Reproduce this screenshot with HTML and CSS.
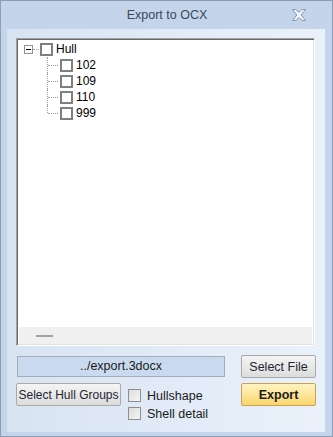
FILE: index.html
```html
<!DOCTYPE html>
<html lang="en">
  <head>
    <meta charset="utf-8" />
    <title>Export to OCX</title>
    <link rel="stylesheet" href="styles.css">
  </head>
  <body>
    <div class="window">
      <!-- Title bar -->
      <div class="titlebar">
        <span class="title">Export to OCX</span>
        <svg class="close" width="14" height="12" viewBox="0 0 14 12">
          <path d="M0.5 0.5H3.8L7 3.3L10.2 0.5H13.5L9.2 6L13.5 11.5H10.2L7 8.7L3.8 11.5H0.5L4.8 6Z" fill="#f1f5fb" stroke="#8397b1" stroke-width="1" stroke-linejoin="round"/>
        </svg>
      </div>

      <div class="client">
        <!-- Hull tree -->
        <div class="tree">
          <div class="tree-list">
            <div class="tree-row root">
              <span class="expander"></span>
              <span class="connector"></span>
              <span class="tree-check"></span>
              <span class="tree-label">Hull</span>
            </div>
            <div class="children">
              <div class="tree-row child"><span class="tree-check"></span><span class="tree-label">102</span></div>
              <div class="tree-row child"><span class="tree-check"></span><span class="tree-label">109</span></div>
              <div class="tree-row child"><span class="tree-check"></span><span class="tree-label">110</span></div>
              <div class="tree-row child last"><span class="tree-check"></span><span class="tree-label">999</span></div>
            </div>
          </div>
          <div class="hscroll"><span class="hscroll-dash"></span></div>
        </div>

        <!-- File row -->
        <div class="file-row">
          <div class="path-box">../export.3docx</div>
          <button class="btn">Select File</button>
        </div>

        <!-- Options row -->
        <div class="options-row">
          <button class="btn btn-groups">Select Hull Groups</button>
          <div class="checks">
            <label class="check"><span class="check-box"></span>Hullshape</label>
            <label class="check"><span class="check-box"></span>Shell detail</label>
          </div>
          <button class="btn btn-export">Export</button>
        </div>
      </div>
    </div>
  </body>
</html>
```

FILE: styles.css
```css
/* Dialog frame */
body {
  margin: 0;
  font-family: "Liberation Sans", Arial, sans-serif;
  font-size: 12px;
  background: #ffffff;
}

.window {
  width: 333px;
  height: 437px;
  box-sizing: border-box;
  border: 1px solid #8d9db5;
  background: #c4d5eb;
  padding: 0 7px 4px 6px;
  display: flex;
  flex-direction: column;
}

.titlebar {
  height: 28px;
  display: flex;
  align-items: center;
  justify-content: center;
  position: relative;
  flex-shrink: 0;
}

.title {
  color: #3b4759;
  font-size: 12.5px;
  padding-left: 2px;
}

.close {
  position: absolute;
  right: 19px;
  top: 8px;
}

.client {
  flex: 1;
  background: linear-gradient(90deg, #d8e3f2 0%, #e3ecf8 60%, #eaf1fa 100%);
  padding: 9px 9px 0 9px;
  display: flex;
  flex-direction: column;
}

/* Tree view */
.tree {
  width: 299px;
  height: 308px;
  box-sizing: border-box;
  border-top: 1px solid #a0a0a0;
  border-left: 1px solid #a0a0a0;
  border-right: 1px solid #ffffff;
  border-bottom: 1px solid #ffffff;
  box-shadow: inset 1px 1px 0 #6a6a6a, inset -1px -1px 0 #e3e3e3;
  background: #ffffff;
  padding: 2px 2px 1px 2px;
  display: flex;
  flex-direction: column;
}

.tree-list {
  flex: 1;
}

.tree-row {
  height: 16px;
  display: flex;
  align-items: center;
  color: #000000;
}

.root {
  padding-left: 5px;
}

.expander {
  width: 7px;
  height: 7px;
  border: 1px solid #919191;
  background: #ffffff;
  position: relative;
}

.expander::after {
  content: "";
  position: absolute;
  left: 1px;
  top: 3px;
  width: 5px;
  height: 1px;
  background: #000000;
}

.connector {
  width: 6px;
  border-top: 1px dotted #a0a0a0;
}

.tree-check {
  width: 9px;
  height: 9px;
  border: 2px solid #7f7f7f;
  background: #ffffff;
  margin-left: 1px;
  flex-shrink: 0;
}

.tree-label {
  margin-left: 3px;
  line-height: 16px;
}

.children {
  margin-left: 28px;
}

.child {
  position: relative;
  padding-left: 12px;
}

.child::before {
  content: "";
  position: absolute;
  left: 0;
  top: 0;
  bottom: 0;
  border-left: 1px dotted #a0a0a0;
}

.child.last::before {
  bottom: 8px;
}

.child::after {
  content: "";
  position: absolute;
  left: 1px;
  top: 8px;
  width: 10px;
  border-top: 1px dotted #a0a0a0;
}

.hscroll {
  height: 17px;
  background: #f0f0f0;
  display: flex;
  align-items: center;
}

.hscroll-dash {
  width: 17px;
  height: 2px;
  background: #a3a3a3;
  margin-left: 17px;
}

/* Bottom controls */
.file-row {
  display: flex;
  align-items: flex-start;
  justify-content: space-between;
  margin-top: 9px;
  width: 300px;
}

.path-box {
  width: 208px;
  height: 21px;
  box-sizing: border-box;
  margin: 1px 0 0 1px;
  border: 1px solid #a4acb6;
  background: #c9daf0;
  color: #1a1a1a;
  text-align: center;
  line-height: 19px;
  font-size: 12.5px;
}

.btn {
  width: 75px;
  height: 23px;
  box-sizing: border-box;
  border: 1px solid #a9a9a9;
  border-radius: 2px;
  background: linear-gradient(180deg, #f4f4f4 0%, #e9e9e9 50%, #dcdcdc 100%);
  font-family: "Liberation Sans", Arial, sans-serif;
  font-size: 12.5px;
  color: #1e2633;
  padding: 0;
}

.options-row {
  display: flex;
  align-items: flex-start;
  margin-top: 5px;
  width: 300px;
}

.btn-groups {
  width: 105px;
  font-size: 12px;
}

.checks {
  margin-left: 7px;
  padding-top: 6px;
  display: flex;
  flex-direction: column;
  gap: 5px;
}

.check {
  display: flex;
  align-items: center;
  height: 13px;
  color: #1a1a1a;
  font-size: 12.5px;
}

.check-box {
  width: 11px;
  height: 11px;
  border: 1px solid #8f8f8f;
  background: linear-gradient(135deg, #dcdcdc 0%, #f6f6f6 100%);
  margin-right: 6px;
}

.btn-export {
  margin-left: auto;
  border-color: #c9a351;
  background: linear-gradient(180deg, #fff3c2 0%, #fde69a 50%, #f9d56b 100%);
  font-weight: bold;
  color: #1a1a1a;
}
```
